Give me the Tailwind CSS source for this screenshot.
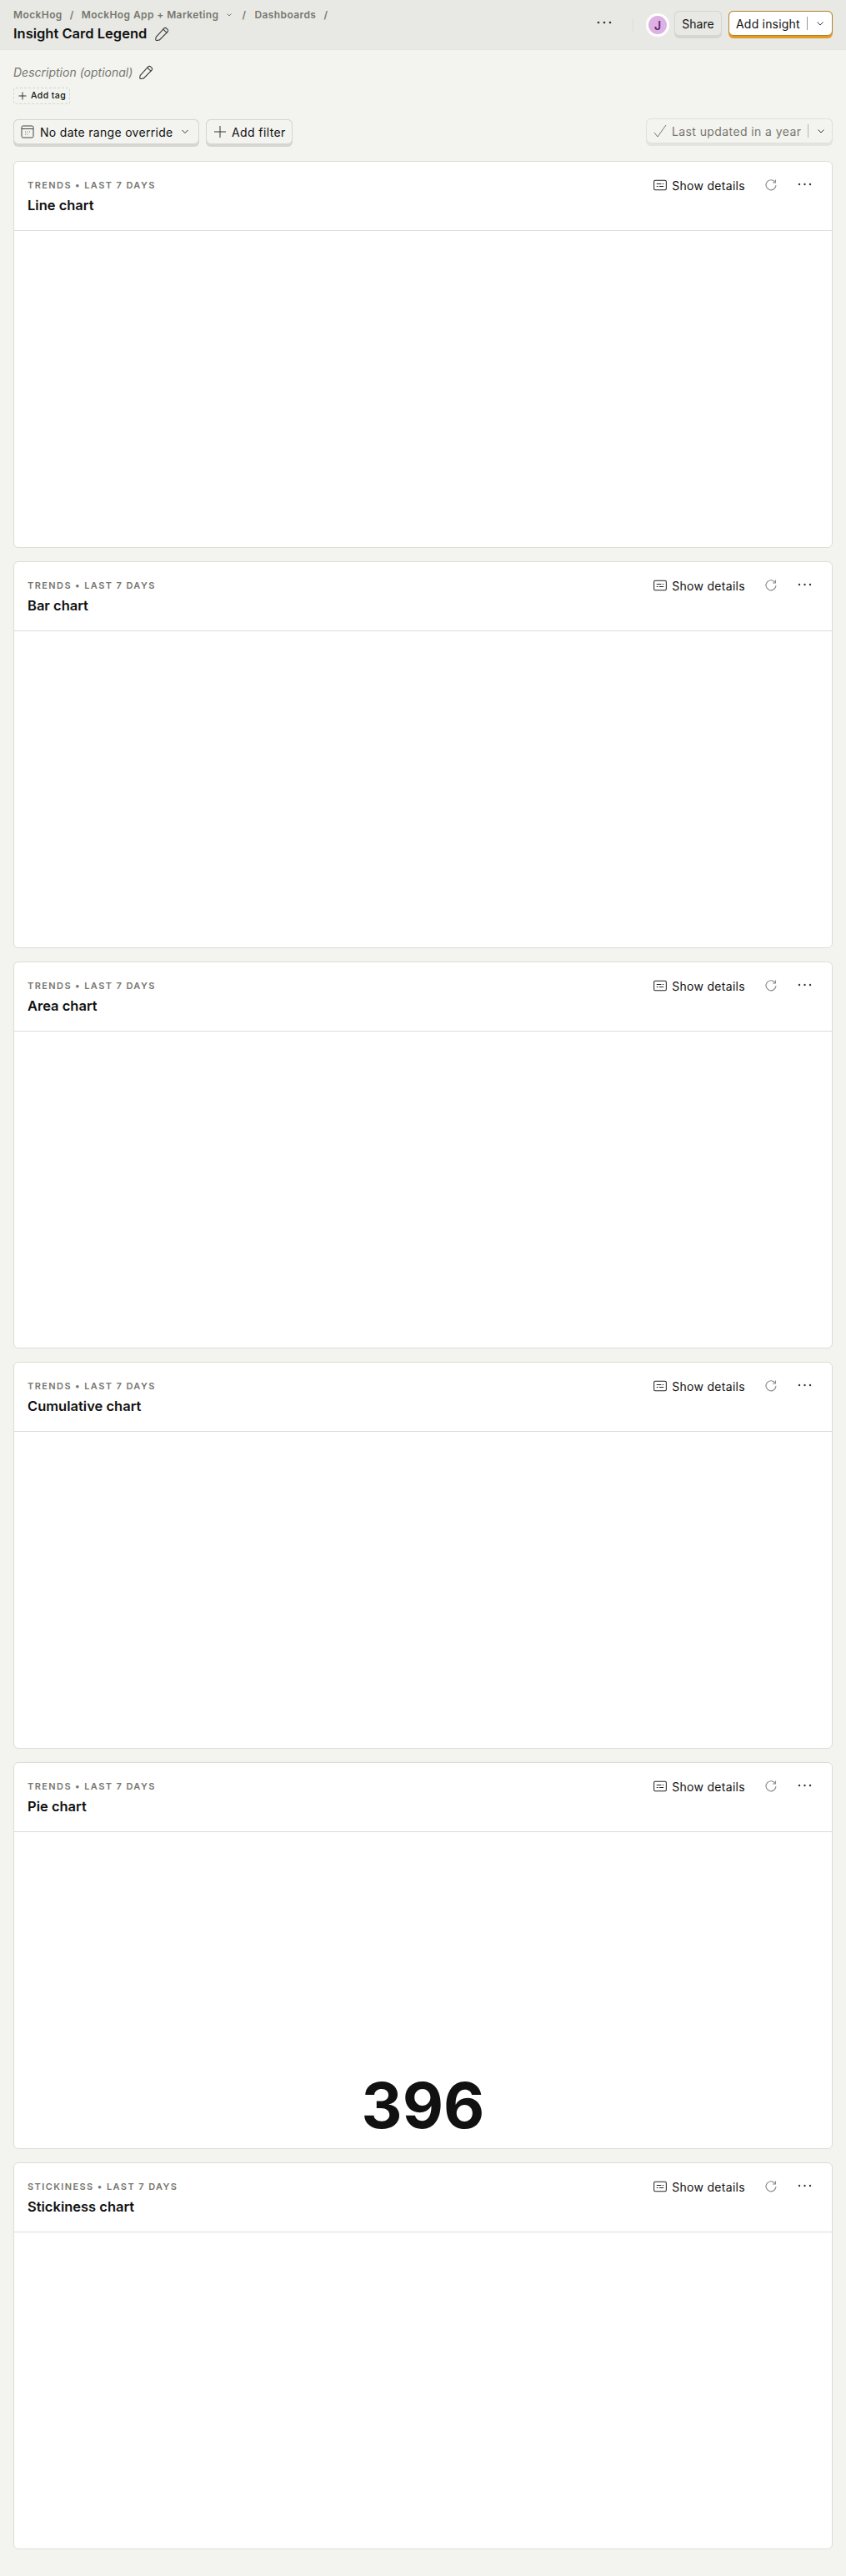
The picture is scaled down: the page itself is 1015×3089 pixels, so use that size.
<!DOCTYPE html>
<html lang="en">
<head>
    <meta charset="UTF-8">
    <meta name="viewport" content="width=device-width, initial-scale=1.0">
    <title>Insight Card Legend</title>
    <script src="https://cdn.jsdelivr.net/npm/@tailwindcss/browser@4"></script>
</head>
<body class="bg-[#f3f4ef] font-['Inter',sans-serif] text-[#111]">
    <!-- top bar -->
    <div class="h-[60px] bg-[#e8e9e4] border-b border-[#e4e5df] pl-[16px] pr-[16px] flex justify-between">
        <div class="pt-[9px]">
            <div class="flex items-center h-[17px] text-[12px] leading-[17px] font-semibold text-[#77776f] tracking-[0.4px]">
                <span>MockHog</span>
                <span class="ml-[9px]">/</span>
                <span class="ml-[9px]">MockHog App + Marketing</span>
                <svg class="ml-[6px] w-[12px] h-[12px]" viewBox="0 0 12 12" fill="none" stroke="#77776f" stroke-width="1"><path d="M3.500 4.500L6 7l2.500-2.500"/></svg>
                <span class="ml-[10px]">/</span>
                <span class="ml-[10px]">Dashboards</span>
                <span class="ml-[9px]">/</span>
            </div>
            <div class="flex items-center mt-[2px] h-[24px]">
                <span class="text-[16.500px] leading-[24px] font-semibold">Insight Card Legend</span>
                <svg class="ml-[9px] w-[19px] h-[19px]" viewBox="0 0 18 18" fill="none" stroke="#333" stroke-width="1"><path d="M2 13l9-10c1-1 2-1 3 0l1 1c1 1 1 2 0 3L6 16l-3 .5c-1 0-1.500-.5-1.300-1.300z"/><path d="M10 4l4.500 4"/></svg>
            </div>
        </div>
        <div class="flex items-start pt-[13px]">
            <svg class="mt-[12px] w-[18px] h-[4px]" viewBox="0 0 18 4" fill="#333"><circle cx="2" cy="2" r="1.300"/><circle cx="9" cy="2" r="1.300"/><circle cx="16" cy="2" r="1.300"/></svg>
            <div class="ml-[25px] mt-[8px] w-px h-[17px] bg-[#dcddd6]"></div>
            <div class="ml-[15px] mt-[3px] w-[28px] h-[28px] rounded-full bg-[#dcb1e3] border-[3px] border-white flex items-center justify-center text-[14px] font-semibold text-[#5e2a6b]">J</div>
            <div class="ml-[6px] h-[33px] w-[57px] rounded-[6px] bg-[#d5d6cf] pb-[3px]">
                <div class="h-[30px] rounded-[6px] border border-[#d5d6cf] bg-[#e8e9e4] flex items-center justify-center text-[14px]">Share</div>
            </div>
            <div class="ml-[8px] h-[33px] w-[125px] rounded-[6px] bg-[#e49b25] pb-[3px]">
                <div class="h-[30px] rounded-[6px] border border-[#b5802b] bg-white flex items-center pl-[8px] text-[14px] tracking-[0.2px]">
                    <span>Add insight</span>
                    <div class="ml-[8px] w-px h-[16px] bg-[#999]"></div>
                    <svg class="ml-[8px] w-[14px] h-[14px]" viewBox="0 0 14 14" fill="none" stroke="#333" stroke-width="1"><path d="M3.500 5.500L7 9l3.500-3.500"/></svg>
                </div>
            </div>
        </div>
    </div>

    <div class="px-[16px] pb-[32px]">
        <!-- description -->
        <div class="flex items-center pt-[9px] h-[43px]">
            <span class="text-[14px] italic text-[#77776f]">Description (optional)</span>
            <svg class="ml-[7px] w-[19px] h-[19px]" viewBox="0 0 18 18" fill="none" stroke="#333" stroke-width="1"><path d="M2 13l9-10c1-1 2-1 3 0l1 1c1 1 1 2 0 3L6 16l-3 .5c-1 0-1.500-.5-1.300-1.300z"/><path d="M10 4l4.500 4"/></svg>
        </div>
        <div class="mt-[1px] inline-flex items-center h-[20px] w-[68px] pl-[4px] rounded-[3px] border border-dashed border-[#d5d6cf] text-[10.500px] font-medium tracking-[0.4px]">
            <svg class="w-[12px] h-[12px] mr-[4px]" viewBox="0 0 12 12" fill="none" stroke="#333" stroke-width="1"><path d="M6 1.500v9M1.500 6h9"/></svg>
            Add tag
        </div>

        <!-- filters -->
        <div class="flex justify-between mt-[16px]">
            <div class="flex gap-[8px]">
                <div class="h-[33px] w-[223px] rounded-[6px] bg-[#d5d6cf] pb-[3px]">
                    <div class="h-[30px] rounded-[6px] border border-[#d5d6cf] bg-[#f3f4ef] flex items-center pl-[8px] text-[14px]">
                        <svg class="w-[16px] h-[16px] mr-[7px]" viewBox="0 0 16 16" fill="none" stroke="#444" stroke-width="1"><rect x="1" y="1" width="14" height="14" rx="1.500"/><path d="M1 4.500h14"/><path d="M5 8h1M7.500 8h1M10 8h1M5 11h1M7.500 11h1" stroke-width="0.800"/></svg>
                        <span class="tracking-[0.3px]">No date range override</span>
                        <svg class="ml-[8px] w-[12px] h-[12px]" viewBox="0 0 12 12" fill="none" stroke="#333" stroke-width="1"><path d="M2.500 4L6 7.500 9.500 4"/></svg>
                    </div>
                </div>
                <div class="h-[33px] w-[104px] rounded-[6px] bg-[#d5d6cf] pb-[3px]">
                    <div class="h-[30px] rounded-[6px] border border-[#d5d6cf] bg-[#f3f4ef] flex items-center pl-[8px] text-[14px]">
                        <svg class="w-[16px] h-[16px] mr-[6px]" viewBox="0 0 16 16" fill="none" stroke="#333" stroke-width="1"><path d="M8 1v14M1 8h14"/></svg>
                        <span class="tracking-[0.4px]">Add filter</span>
                    </div>
                </div>
            </div>
            <div class="h-[33px] w-[224px] -mt-px rounded-[6px] bg-[#e3e4de] pb-[3px]">
                <div class="h-[30px] rounded-[6px] border border-[#e0e1db] bg-[#f3f4ef] flex items-center pl-[8px] text-[14px] text-[#77776f]">
                    <svg class="w-[16px] h-[16px] mr-[6px]" viewBox="0 0 16 16" fill="none" stroke="#77776f" stroke-width="1"><path d="M1 10l4 5L15 1"/></svg>
                    <span class="tracking-[0.4px]">Last updated in a year</span>
                    <div class="ml-[8px] w-px h-[16px] bg-[#b5b5ad]"></div>
                    <svg class="ml-[8px] w-[14px] h-[14px]" viewBox="0 0 14 14" fill="none" stroke="#333" stroke-width="1"><path d="M3.500 5.500L7 9l3.500-3.500"/></svg>
                </div>
            </div>
        </div>

        <!-- cards -->
        <div id="cards" class="mt-[17px] flex flex-col gap-[16px]"></div>
    </div>

    <script>
        var insights = [
            { kind: 'TRENDS', name: 'Line chart' },
            { kind: 'TRENDS', name: 'Bar chart' },
            { kind: 'TRENDS', name: 'Area chart' },
            { kind: 'TRENDS', name: 'Cumulative chart' },
            { kind: 'TRENDS', name: 'Pie chart', total: '396' },
            { kind: 'STICKINESS', name: 'Stickiness chart' }
        ];

        function renderCards() {
            var container = document.getElementById('cards');
            insights.forEach(function (item) {
                var div = document.createElement('div');
                div.className = 'h-[464px] bg-white rounded-[6px] border border-[#dcddd5] overflow-hidden flex flex-col';
                div.innerHTML = `
                    <div class="h-[83px] shrink-0 border-b border-[#dcddd5] pl-[16px] pr-[24px] pt-[21px] flex justify-between">
                        <div>
                            <div class="text-[11px] leading-[14px] font-semibold tracking-[1.400px] text-[#77776f]">${item.kind} • LAST 7 DAYS</div>
                            <div class="mt-[5px] text-[16.500px] leading-[24px] font-semibold">${item.name}</div>
                        </div>
                        <div class="flex items-start">
                            <svg class="w-[16px] h-[14px]" viewBox="0 0 17 14" fill="none" stroke="#222" stroke-width="1.100"><rect x="0.700" y="1" width="15.600" height="12" rx="1.500"/><path d="M4 5.500h6M11.500 5.500h1.500M4 8.500h2M7.500 8.500h5.500"/></svg>
                            <span class="ml-[6px] -mt-px text-[14px] leading-[17px] tracking-[0.3px]">Show details</span>
                            <svg class="ml-[23px] -mt-px w-[16px] h-[16px]" viewBox="0 0 16 16" fill="none" stroke="#888" stroke-width="1.100"><path d="M13 4.500A6 6 0 1 0 14 8"/><path d="M13.500 1.500v3.500h-3.500"/></svg>
                            <svg class="ml-[24px] mt-[4px] w-[17px] h-[4px]" viewBox="0 0 17 4" fill="#333"><circle cx="2" cy="2" r="1.200"/><circle cx="8.500" cy="2" r="1.200"/><circle cx="15" cy="2" r="1.200"/></svg>
                        </div>
                    </div>
                    <div class="flex-1 flex items-end justify-center">
                        ${item.total ? `<div class="text-[76px] leading-[92px] pb-[6px] font-bold text-[#111]">${item.total}</div>` : ''}
                    </div>
                `;
                container.appendChild(div);
            });
        }

        renderCards();
    </script>
</body>
</html>
